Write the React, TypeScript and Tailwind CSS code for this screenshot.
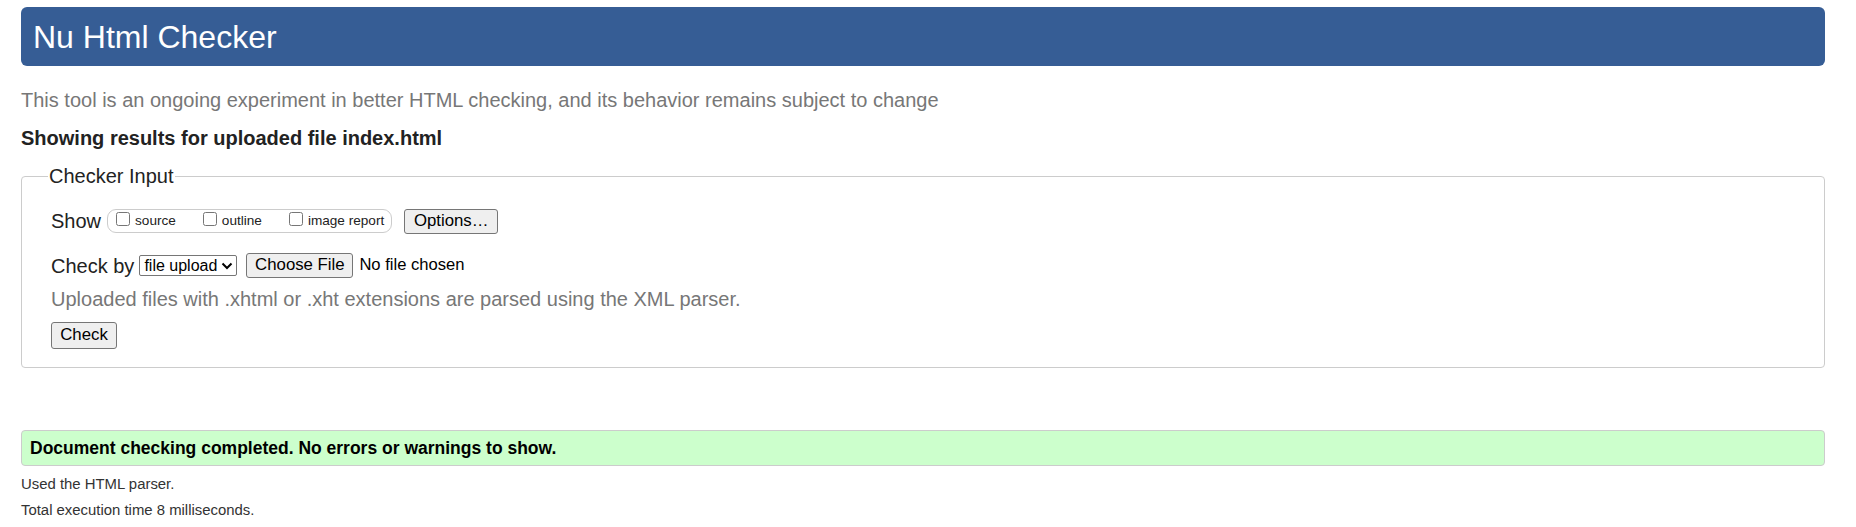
import React from "react";

function Checkbox({ label }: { label: string }) {
  return (
    <label className="flex items-start gap-[5px]">
      <input type="checkbox" className="m-0 mt-[1px] w-[14px] h-[14px]" />
      <span className="text-[13.6px] leading-[16px] mt-[2px] text-[#222]">{label}</span>
    </label>
  );
}

function NativeButton({ children, className = "" }: { children: React.ReactNode; className?: string }) {
  return (
    <button
      className={`bg-[#efefef] border border-[#767676] rounded-[3px] text-[16.8px] leading-none text-black ${className}`}
    >
      {children}
    </button>
  );
}

export default function App() {
  return (
    <div className="min-h-[527px] bg-white pl-[21px] pr-[31px] pt-[7px] font-['Liberation_Sans',Arial,sans-serif] text-[#222]">
      <header className="h-[59px] flex items-center rounded-[6px] bg-[#365d95] pl-[12px]">
        <h1 className="text-[32px] leading-none text-white">Nu Html Checker</h1>
      </header>

      <p className="mt-[22px] text-[20px] leading-[24px] text-[#777]">
        This tool is an ongoing experiment in better HTML checking, and its behavior remains subject to change
      </p>

      <h2 className="mt-[14px] text-[20px] leading-[24px] font-bold text-[#222]">
        Showing results for uploaded file index.html
      </h2>

      {/* Checker input */}
      <fieldset className="mt-[14px] border border-[#ccc] rounded-[4px] pl-[29px] pb-[18px]">
        <legend className="-ml-[3px] px-[1px] text-[20px] leading-[24px] text-[#222]">Checker Input</legend>

        <div className="mt-[19px] h-[28px] flex items-center">
          <span className="text-[20px] leading-[24px]">Show</span>
          <div className="ml-[6px] h-[24px] flex items-start gap-[27px] border border-[#ccc] rounded-[9px] pl-[8px] pr-[7px] pt-[1px]">
            <Checkbox label="source" />
            <Checkbox label="outline" />
            <Checkbox label="image report" />
          </div>
          <NativeButton className="ml-[12px] h-[25px] w-[94px]">Options…</NativeButton>
        </div>

        <div className="mt-[16px] h-[29px] flex items-center">
          <span className="text-[20px] leading-[24px]">Check by</span>
          <div className="ml-[5px] h-[21px] w-[98px] flex items-center justify-between border border-[#767676] rounded-[2px] bg-white pl-[4px] pr-[2px]">
            <span className="text-[16px] leading-none text-black">file upload</span>
            <svg width="12" height="8" viewBox="0 0 12 8" className="mr-[1px]">
              <path d="M1.5 1.5 L6 6 L10.5 1.5" fill="none" stroke="#000" strokeWidth="2" />
            </svg>
          </div>
          <NativeButton className="ml-[9px] h-[25px] w-[107px]">Choose File</NativeButton>
          <span className="ml-[6px] text-[16.6px] leading-none text-black">No file chosen</span>
        </div>

        <p className="mt-[7px] text-[20px] leading-[24px] text-[#777]">
          Uploaded files with .xhtml or .xht extensions are parsed using the XML parser.
        </p>

        <NativeButton className="mt-[11px] h-[27px] w-[66px]">Check</NativeButton>
      </fieldset>

      {/* Result */}
      <div className="mt-[62px] h-[36px] flex items-center border border-[#ccc] rounded-[4px] bg-[#ccffcc] pl-[8px]">
        <p className="text-[17.5px] leading-[24px] font-bold text-black">
          Document checking completed. No errors or warnings to show.
        </p>
      </div>

      <p className="mt-[6px] text-[14.9px] leading-[25px] text-[#333]">Used the HTML parser.</p>
      <p className="mt-[1px] text-[14.9px] leading-[25px] text-[#333]">Total execution time 8 milliseconds.</p>
    </div>
  );
}
